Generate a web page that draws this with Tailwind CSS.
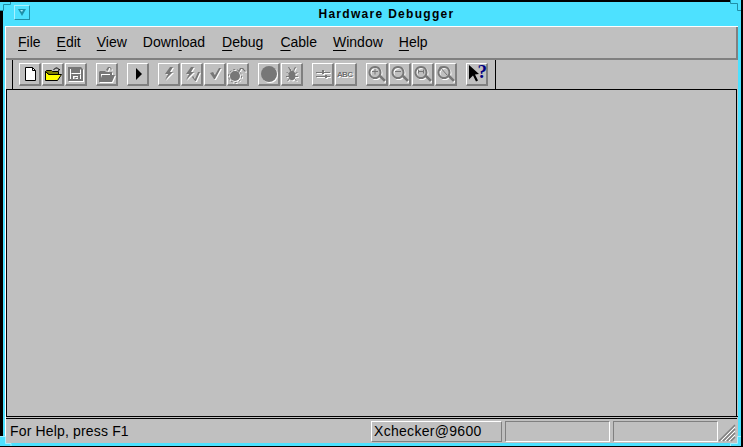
<!DOCTYPE html>
<html lang="en">
<head>
    <meta charset="UTF-8">
    <title>Hardware Debugger</title>
    <script src="https://cdn.jsdelivr.net/npm/@tailwindcss/browser@4"></script>
</head>
<body class="bg-black overflow-hidden">
    <!-- shared toolbar glyphs, drawn in currentColor so the disabled look can stack a white copy under a grey one -->
    <svg class="absolute w-0 h-0">
        <defs>
            <g id="i-save"><path fill-rule="evenodd" d="M2 3h13l2 2v12H2zM4 5v10h1v-5h9v5h1V6l-1-1v4H5V5zM7 12v3h5v-3zM9 13h2v1H9z"/></g>
            <g id="i-folder"><path d="M2 8l1-1h5l1 1h6v3h3l-3 7H2zM4 10v4l1-3h8v-1z"/><path d="M9 6l2-3h2l2 2-1 1-1-2h-1l-1 3z"/></g>
            <g id="i-bolt"><path d="M11 3h3l-3 5h3l-8 8 3-6H6z"/></g>
            <g id="i-bolt2"><path d="M9 3h3L9 8h3l-8 8 3-6H4z"/><path d="M11 12l2 3 3-7h2l-4 9h-1l-3-4z"/></g>
            <g id="i-check"><path d="M5 9l3-1 2 3 4-7h2l-6 11H9z"/></g>
            <g id="i-bomb"><circle cx="7" cy="12" r="5"/><circle cx="7" cy="12" r="6.500" fill="none" stroke="currentColor" stroke-dasharray="2 2"/><path d="M10 8l2-4h3l3 3-1 1-3-3h-1l-2 4z"/></g>
            <g id="i-dot"><circle cx="10" cy="10" r="8"/></g>
            <g id="i-bug"><ellipse cx="10" cy="11.500" rx="3.500" ry="5"/><path d="M8 5h1v2H8zM11 5h1v2h-1zM6 3h1l2 3-1 1zM14 3h-1l-2 3 1 1zM4 8h1l3 2v1zM16 8h-1l-3 2v1zM5 17h1l2-3v-1zM15 17h-1l-2-3v-1zM4 12h4v1H4zM12 12h4v1h-4z"/></g>
            <g id="i-switch"><path d="M3 8h6V6h2v2h6v1h-6v1H9V9H3zM3 12h9v-1h2v1h3v1h-3v1h-2v-1H3z"/></g>
            <g id="i-zoom"><path fill-rule="evenodd" d="M8 2a6.500 6.500 0 1 0 .01 0zM8 4a4.500 4.500 0 1 1-.01 0z"/><path d="M12 12l2-1 5 5-2 2-5-5z"/></g>
        </defs>
    </svg>

    <div class="relative w-[743px] h-[447px] pt-[2px] pl-[3px] pr-[2px] pb-px font-['Liberation_Sans',sans-serif] text-[14px] text-black">
        <div class="h-full flex flex-col bg-[#4de1ff] pl-[2px] pr-[3px] pb-[3px]">
            <!-- title bar -->
            <div class="relative h-[24px] shrink-0 flex items-center justify-center font-bold text-[12px] leading-none tracking-[1.3px]">
                <span class="pl-[30px]">Hardware Debugger</span>
                <div class="absolute left-[9px] top-[3px] w-[16px] h-[15px] border border-t-[#a8f0ff] border-l-[#a8f0ff] border-r-[#1f8fa8] border-b-[#1f8fa8] flex items-center justify-center">
                    <svg width="8" height="7" viewBox="0 0 8 7"><path d="M0 0h8L4 7z" fill="#1f8fa8"/><path d="M2 1h3L4 3z" fill="#a8f0ff"/></svg>
                </div>
            </div>

            <div class="flex-1 min-h-0 flex flex-col bg-[#c0c0c0] border-t border-t-white border-l border-l-white">
                <!-- menu bar -->
                <div class="h-[33px] shrink-0 flex items-center pl-[12px] gap-[16px] border-b-[2px] border-r-[2px] border-[#808080] pb-[1px]">
                    <span><span class="underline underline-offset-[3px]">F</span>ile</span>
                    <span><span class="underline underline-offset-[3px]">E</span>dit</span>
                    <span><span class="underline underline-offset-[3px]">V</span>iew</span>
                    <span>Down<span class="underline underline-offset-[3px]">l</span>oad</span>
                    <span class="ml-px"><span class="underline underline-offset-[3px]">D</span>ebug</span>
                    <span class="ml-px"><span class="underline underline-offset-[3px]">C</span>able</span>
                    <span><span class="underline underline-offset-[3px]">W</span>indow</span>
                    <span><span class="underline underline-offset-[3px]">H</span>elp</span>
                </div>

                <!-- toolbar -->
                <div class="h-[30px] shrink-0 flex border-b border-black mr-[1px]">
                    <div class="w-[484px] ml-[6px] border-l border-r border-black flex items-center pl-[6px] gap-[9px]">
                        <div class="flex gap-px">
                            <div class="w-[22px] h-[23px] border-t border-l border-white border-r-2 border-b-2 border-r-[#808080] border-b-[#808080]">
                                <svg class="block" width="19" height="20" viewBox="0 0 19 20"><path d="M5.500 3.500h7l3 3v10h-10z" fill="#fff" stroke="#000"/><path d="M12.500 3.500v3h3" fill="none" stroke="#000"/></svg>
                            </div>
                            <div class="w-[22px] h-[23px] border-t border-l border-white border-r-2 border-b-2 border-r-[#808080] border-b-[#808080]">
                                <svg class="block" width="19" height="20" viewBox="0 0 19 20"><path d="M2.500 7.500l1-1h5l1 1h6v3H6z" fill="#808000" stroke="#000"/><path d="M2.500 16.500v-9l3 3h13l-4 6z" fill="#ff0" stroke="#000"/><path d="M10.500 6l2-2h2l2 2M15 6.500l2-1" fill="none" stroke="#000"/></svg>
                            </div>
                            <div class="w-[22px] h-[23px] border-t border-l border-white border-r-2 border-b-2 border-r-[#808080] border-b-[#808080]">
                                <svg class="block" width="19" height="20" viewBox="0 0 19 20"><use href="#i-save" x="1" y="1" class="text-white" fill="currentColor"/><use href="#i-save" class="text-[#777]" fill="currentColor"/></svg>
                            </div>
                        </div>
                        <div class="w-[22px] h-[23px] border-t border-l border-white border-r-2 border-b-2 border-r-[#808080] border-b-[#808080]">
                            <svg class="block" width="19" height="20" viewBox="0 0 19 20"><use href="#i-folder" x="1" y="1" class="text-white" fill="currentColor"/><use href="#i-folder" class="text-[#777]" fill="currentColor"/></svg>
                        </div>
                        <div class="w-[22px] h-[23px] border-t border-l border-white border-r-2 border-b-2 border-r-[#808080] border-b-[#808080]">
                            <svg class="block" width="19" height="20" viewBox="0 0 19 20"><path d="M8 4l6 6-6 6z"/></svg>
                        </div>
                        <div class="flex gap-px">
                            <div class="w-[22px] h-[23px] border-t border-l border-white border-r-2 border-b-2 border-r-[#808080] border-b-[#808080]">
                                <svg class="block" width="19" height="20" viewBox="0 0 19 20"><use href="#i-bolt" x="1" y="1" class="text-white" fill="currentColor"/><use href="#i-bolt" class="text-[#777]" fill="currentColor"/></svg>
                            </div>
                            <div class="w-[22px] h-[23px] border-t border-l border-white border-r-2 border-b-2 border-r-[#808080] border-b-[#808080]">
                                <svg class="block" width="19" height="20" viewBox="0 0 19 20"><use href="#i-bolt2" x="1" y="1" class="text-white" fill="currentColor"/><use href="#i-bolt2" class="text-[#777]" fill="currentColor"/></svg>
                            </div>
                            <div class="w-[22px] h-[23px] border-t border-l border-white border-r-2 border-b-2 border-r-[#808080] border-b-[#808080]">
                                <svg class="block" width="19" height="20" viewBox="0 0 19 20"><use href="#i-check" x="1" y="1" class="text-white" fill="currentColor"/><use href="#i-check" class="text-[#777]" fill="currentColor"/></svg>
                            </div>
                            <div class="w-[22px] h-[23px] border-t border-l border-white border-r-2 border-b-2 border-r-[#808080] border-b-[#808080]">
                                <svg class="block" width="19" height="20" viewBox="0 0 19 20"><use href="#i-bomb" x="1" y="1" class="text-white" fill="currentColor"/><use href="#i-bomb" class="text-[#777]" fill="currentColor"/></svg>
                            </div>
                        </div>
                        <div class="flex gap-px">
                            <div class="w-[22px] h-[23px] border-t border-l border-white border-r-2 border-b-2 border-r-[#808080] border-b-[#808080]">
                                <svg class="block" width="19" height="20" viewBox="0 0 19 20"><use href="#i-dot" x="1" y="1" class="text-white" fill="currentColor"/><use href="#i-dot" class="text-[#777]" fill="currentColor"/></svg>
                            </div>
                            <div class="w-[22px] h-[23px] border-t border-l border-white border-r-2 border-b-2 border-r-[#808080] border-b-[#808080]">
                                <svg class="block" width="19" height="20" viewBox="0 0 19 20"><use href="#i-bug" x="1" y="1" class="text-white" fill="currentColor"/><use href="#i-bug" class="text-[#777]" fill="currentColor"/></svg>
                            </div>
                        </div>
                        <div class="flex gap-px">
                            <div class="w-[22px] h-[23px] border-t border-l border-white border-r-2 border-b-2 border-r-[#808080] border-b-[#808080]">
                                <svg class="block" width="19" height="20" viewBox="0 0 19 20"><use href="#i-switch" x="1" y="1" class="text-white" fill="currentColor"/><use href="#i-switch" class="text-[#777]" fill="currentColor"/></svg>
                            </div>
                            <div class="w-[22px] h-[23px] border-t border-l border-white border-r-2 border-b-2 border-r-[#808080] border-b-[#808080]">
                                <svg class="block font-['Liberation_Sans',sans-serif] font-bold text-[8px]" width="19" height="20" viewBox="0 0 19 20"><text x="10" y="13.500" text-anchor="middle" fill="#fff" textLength="16">ABC</text><text x="9" y="12.500" text-anchor="middle" fill="#6e6e6e" textLength="16">ABC</text></svg>
                            </div>
                        </div>
                        <div class="flex gap-px">
                            <div class="w-[22px] h-[23px] border-t border-l border-white border-r-2 border-b-2 border-r-[#808080] border-b-[#808080]">
                                <svg class="block" width="19" height="20" viewBox="0 0 19 20"><use href="#i-zoom" x="1" y="1" class="text-white" fill="currentColor"/><use href="#i-zoom" class="text-[#777]" fill="currentColor"/><path d="M5 7.500h6M8 4.500v6" stroke="#777"/></svg>
                            </div>
                            <div class="w-[22px] h-[23px] border-t border-l border-white border-r-2 border-b-2 border-r-[#808080] border-b-[#808080]">
                                <svg class="block" width="19" height="20" viewBox="0 0 19 20"><use href="#i-zoom" x="1" y="1" class="text-white" fill="currentColor"/><use href="#i-zoom" class="text-[#777]" fill="currentColor"/><path d="M5 7.500h6" stroke="#777"/></svg>
                            </div>
                            <div class="w-[22px] h-[23px] border-t border-l border-white border-r-2 border-b-2 border-r-[#808080] border-b-[#808080]">
                                <svg class="block" width="19" height="20" viewBox="0 0 19 20"><use href="#i-zoom" x="1" y="1" class="text-white" fill="currentColor"/><use href="#i-zoom" class="text-[#777]" fill="currentColor"/><path d="M5 7.500h6M5.500 5.500v4M10.500 5.500v4" stroke="#777"/></svg>
                            </div>
                            <div class="w-[22px] h-[23px] border-t border-l border-white border-r-2 border-b-2 border-r-[#808080] border-b-[#808080]">
                                <svg class="block" width="19" height="20" viewBox="0 0 19 20"><use href="#i-zoom" x="1" y="1" class="text-white" fill="currentColor"/><use href="#i-zoom" class="text-[#777]" fill="currentColor"/><path d="M4 3l7 8M4 3h4M4 3v4" stroke="#777" fill="none"/></svg>
                            </div>
                        </div>
                        <div class="w-[22px] h-[23px] border-t border-l border-white border-r-2 border-b-2 border-r-[#808080] border-b-[#808080]">
                            <svg class="block overflow-visible font-['Liberation_Serif',serif] font-bold text-[19px]" width="19" height="20" viewBox="0 0 19 20"><path d="M2 1l10 9-4 .5 3 6-2 1-3-6-4 4z"/><text x="10.500" y="13.500" fill="#000080">?</text></svg>
                        </div>
                    </div>
                </div>

                <!-- client area -->
                <div class="flex-1 min-h-0 mr-px border-l border-r border-black"></div>

                <!-- status bar -->
                <div class="h-[27px] shrink-0 border-t border-black pt-px">
                    <div class="h-full border-t border-black mr-px flex items-center pl-[4px] pr-[1px] tracking-[0.16px]">
                        <span class="flex-1">For Help, press F1</span>
                        <div class="flex gap-[3px] mt-px">
                            <div class="w-[131px] h-[21px] pl-[2px] leading-[19px] tracking-[0.3px] border border-t-white border-l-white border-r-[#808080] border-b-[#808080]">Xchecker@9600</div>
                            <div class="w-[105px] h-[21px] border border-t-[#808080] border-l-[#808080] border-r-white border-b-white"></div>
                            <div class="w-[105px] h-[21px] border border-t-[#808080] border-l-[#808080] border-r-white border-b-white"></div>
                        </div>
                        <svg class="self-end mb-[1px]" width="18" height="18" viewBox="0 0 18 18"><path d="M1 17L17 1M5 17L17 5M9 17l8-8M13 17l4-4" stroke="#808080" stroke-width="1.500"/><path d="M3 17L17 3M7 17L17 7M11 17l6-6" stroke="#fff"/></svg>
                    </div>
                </div>
            </div>
        </div>

        <!-- window manager corner handles -->
        <svg class="absolute left-0 top-0" width="12" height="12" viewBox="0 0 12 12"><path d="M0 11V2h11v2H3v7z" fill="#4de1ff"/><path d="M0 10.500h3.500v-6h7V2" fill="none" stroke="#1f8fa8"/></svg>
        <svg class="absolute right-[2px] top-0" width="11" height="12" viewBox="0 0 11 12"><path d="M0 0h11v11H8V4H0z" fill="#4de1ff"/><path d="M0.500 0v3.500h7v7H11" fill="none" stroke="#1f8fa8"/></svg>
        <svg class="absolute left-0 bottom-0" width="12" height="11" viewBox="0 0 12 11"><path d="M0 0h5v7h7v3H0z" fill="#4de1ff"/><path d="M0 .500h5.500v7H11V10" fill="none" stroke="#a8f0ff"/></svg>
        <svg class="absolute right-[2px] bottom-0" width="11" height="11" viewBox="0 0 11 11"><path d="M11 0H8v7H0v3h11z" fill="#4de1ff"/><path d="M11 .500H7.500v7H.500V10" fill="none" stroke="#a8f0ff"/></svg>
    </div>
</body>
</html>
